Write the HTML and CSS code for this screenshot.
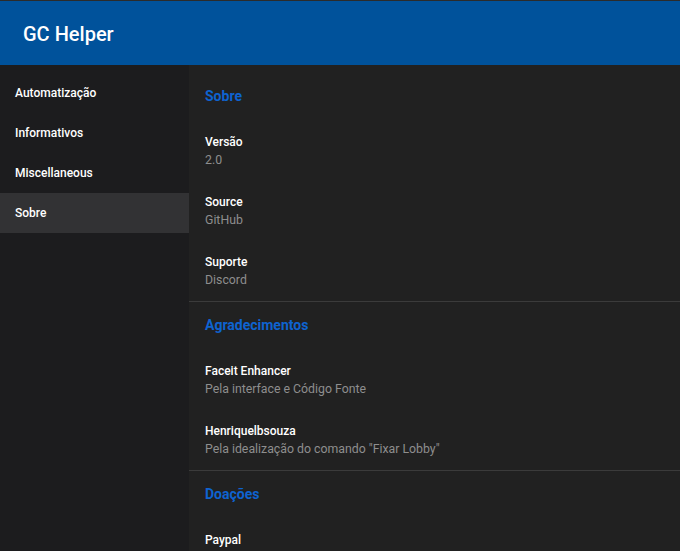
FILE: index.html
```html
<!DOCTYPE html>
<html lang="pt">
<head>
<meta charset="utf-8">
<title>GC Helper</title>
<link rel="stylesheet" href="styles.css">
</head>
<body>
<header class="toolbar"><span class="title">GC Helper</span></header>
<div class="layout">
  <nav class="sidebar">
    <a class="nav-item">Automatização</a>
    <a class="nav-item">Informativos</a>
    <a class="nav-item">Miscellaneous</a>
    <a class="nav-item active">Sobre</a>
  </nav>
  <main class="content">
    <section class="section">
      <h3 class="subheader">Sobre</h3>
      <div class="item"><div class="label">Versão</div><div class="value">2.0</div></div>
      <div class="item"><div class="label">Source</div><div class="value">GitHub</div></div>
      <div class="item"><div class="label">Suporte</div><div class="value">Discord</div></div>
    </section>
    <section class="section">
      <h3 class="subheader">Agradecimentos</h3>
      <div class="item"><div class="label">Faceit Enhancer</div><div class="value">Pela interface e Código Fonte</div></div>
      <div class="item"><div class="label">Henriquelbsouza</div><div class="value">Pela idealização do comando "Fixar Lobby"</div></div>
    </section>
    <section class="section">
      <h3 class="subheader">Doações</h3>
      <div class="item"><div class="label">Paypal</div><div class="value">&nbsp;</div></div>
    </section>
  </main>
</div>
</body>
</html>
```
FILE: styles.css
```css
* { box-sizing: border-box; }
html, body { margin: 0; padding: 0; height: 100%; overflow: hidden; }
body {
  font-family: Roboto, "Liberation Sans", sans-serif;
  background: #212121;
  color: #fff;
  display: flex;
  flex-direction: column;
}
.toolbar {
  height: 65px;
  flex: none;
  background: #00529b;
  border-top: 1px solid #2b2b2b;
  display: flex;
  align-items: center;
  padding: 0 23px;
}
.title {
  font-size: 20px;
  font-weight: 500;
  margin-top: 1px;
}
.layout {
  flex: 1;
  display: flex;
  min-height: 0;
}
.sidebar {
  width: 189px;
  flex: none;
  background: #1c1c1e;
  padding-top: 8px;
  display: flex;
  flex-direction: column;
}
.nav-item {
  height: 40px;
  display: flex;
  align-items: center;
  padding: 0 15px 1px;
  font-size: 12px;
  font-weight: 500;
  color: #fff;
}
.nav-item.active { background: #323234; }
.content {
  flex: 1;
  background: #212121;
  padding-top: 8px;
}
.section + .section {
  border-top: 1px solid #3b3b3b;
}
.subheader {
  margin: 0;
  height: 48px;
  display: flex;
  align-items: center;
  padding: 0 16px 2px;
  font-size: 14px;
  font-weight: 700;
  color: #0e63d0;
}
.item {
  height: 60px;
  display: flex;
  flex-direction: column;
  justify-content: center;
  padding: 0 16px;
}
.label {
  font-size: 12px;
  font-weight: 500;
  line-height: 18px;
  color: #fff;
}
.value {
  font-size: 12.3px;
  line-height: 18px;
  color: #8e8e8e;
}
```
